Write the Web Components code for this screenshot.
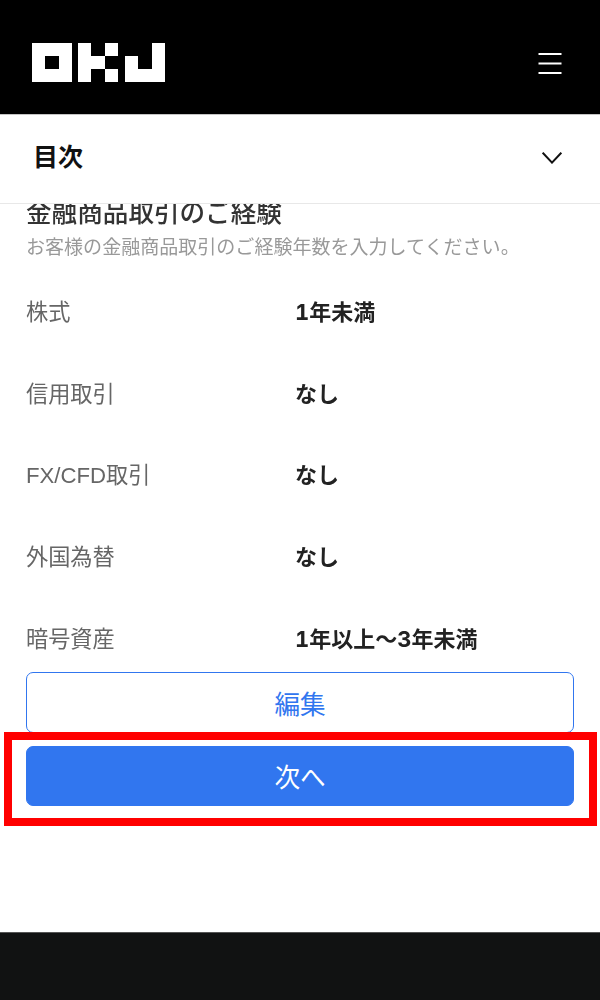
<!DOCTYPE html>
<html lang="ja">
<head>
<meta charset="utf-8">
<title>OKJ</title>
<style>
  html, body { margin: 0; padding: 0; background: #fff; }
  body { font-family: "Inter", "Noto Sans CJK JP", sans-serif; }
</style>
</head>
<body>
<okj-page>
  <okj-header slot="header"></okj-header>
  <toc-bar slot="header">目次</toc-bar>
  <exp-section title="金融商品取引のご経験" note="お客様の金融商品取引のご経験年数を入力してください。">
    <exp-row label="株式" value="1年未満"></exp-row>
    <exp-row label="信用取引" value="なし"></exp-row>
    <exp-row label="FX/CFD取引" value="なし"></exp-row>
    <exp-row label="外国為替" value="なし"></exp-row>
    <exp-row label="暗号資産" value="1年以上〜3年未満"></exp-row>
  </exp-section>
  <form-actions>
    <action-button kind="outline">編集</action-button>
    <action-button kind="primary" marked>次へ</action-button>
  </form-actions>
</okj-page>

<script>
class OkjPage extends HTMLElement {
  constructor() {
    super();
    this.attachShadow({ mode: 'open' });
    this.shadowRoot.innerHTML = `
      <style>
        :host { display: flex; flex-direction: column; width: 600px; height: 1000px; overflow: hidden; filter: blur(0.4px); }
        main { flex: 1; min-height: 0; overflow: hidden; }
        footer { height: 67px; background: #111212; border-top: 1px solid #555; }
      </style>
      <slot name="header"></slot>
      <main><slot></slot></main>
      <footer></footer>
    `;
  }
}
customElements.define('okj-page', OkjPage);

class OkjHeader extends HTMLElement {
  constructor() {
    super();
    this.attachShadow({ mode: 'open' });
    this.shadowRoot.innerHTML = `
      <style>
        :host { display: flex; justify-content: space-between; align-items: flex-start; box-sizing: border-box;
                height: 115px; padding: 43px 38px 0 32px; background: #000; border-bottom: 1px solid #c4c4c4; }
        svg { display: block; }
        .menu { margin-top: 10px; }
      </style>
      <svg width="133" height="39" viewBox="0 0 133 39" fill="#fff">
        <path fill-rule="evenodd" d="M0 0H40V39H0ZM13 13V26H27V13Z"/>
        <path d="M46 0H59V13H73V26H59V39H46ZM73 0H86V13H73ZM73 26H86V39H73Z"/>
        <path d="M120 0H133V39H93V13H106V26H120Z"/>
      </svg>
      <svg class="menu" width="24" height="21" viewBox="0 0 24 21" stroke="#fff" stroke-width="2">
        <path d="M0.5 1H23.5M0.5 10.5H23.5M0.5 20H23.5"/>
      </svg>
    `;
  }
}
customElements.define('okj-header', OkjHeader);

class TocBar extends HTMLElement {
  constructor() {
    super();
    this.attachShadow({ mode: 'open' });
    this.shadowRoot.innerHTML = `
      <style>
        :host { display: flex; justify-content: space-between; align-items: center; box-sizing: border-box;
                height: 89px; padding: 0 38px 0 33px; background: #fff; border-bottom: 1px solid #e8e8e8;
                color: #111; font-size: 25px; font-weight: 700; }
        .name { margin-bottom: 8px; }
        svg { display: block; margin-bottom: 3px; }
      </style>
      <span class="name"><slot></slot></span>
      <svg width="20" height="12" viewBox="0 0 20 12" fill="none" stroke="#111" stroke-width="2">
        <path d="M0.7 0.7L10 10.6L19.3 0.7"/>
      </svg>
    `;
  }
}
customElements.define('toc-bar', TocBar);

class ExpSection extends HTMLElement {
  constructor() {
    super();
    this.attachShadow({ mode: 'open' });
    this.shadowRoot.innerHTML = `
      <style>
        :host { display: block; padding: 0 26px; }
        h2 { margin: -9.5px 0 0; font-size: 25.6px; line-height: 36px; font-weight: 500; color: #333; }
        p { margin: 3.5px 0 28px; font-size: 19.05px; line-height: 28px; color: #999; white-space: nowrap; }
        .rows { display: flex; flex-direction: column; gap: 41.67px; }
      </style>
      <h2>${this.getAttribute('title')}</h2>
      <p>${this.getAttribute('note')}</p>
      <div class="rows"><slot></slot></div>
    `;
  }
}
customElements.define('exp-section', ExpSection);

class ExpRow extends HTMLElement {
  constructor() {
    super();
    this.attachShadow({ mode: 'open' });
    this.shadowRoot.innerHTML = `
      <style>
        :host { display: grid; grid-template-columns: 269px 1fr; height: 40px; align-items: center; font-size: 22.2px; }
        .label { color: #666; font-family: "Liberation Sans", "Noto Sans CJK JP", sans-serif; }
        .value { color: #222; font-size: 22px; font-weight: 700; font-variant-numeric: tabular-nums; }
      </style>
      <div class="label">${this.getAttribute('label')}</div>
      <div class="value">${this.getAttribute('value')}</div>
    `;
  }
}
customElements.define('exp-row', ExpRow);

class FormActions extends HTMLElement {
  constructor() {
    super();
    this.attachShadow({ mode: 'open' });
    this.shadowRoot.innerHTML = `
      <style>
        :host { display: flex; flex-direction: column; gap: 13px; margin: 15px 26px 0; }
      </style>
      <slot></slot>
    `;
  }
}
customElements.define('form-actions', FormActions);

class ActionButton extends HTMLElement {
  constructor() {
    super();
    this.attachShadow({ mode: 'open' });
    const outline = this.getAttribute('kind') === 'outline';
    this.shadowRoot.innerHTML = `
      <style>
        :host { display: block; position: relative; }
        .btn { display: flex; justify-content: center; align-items: center; box-sizing: border-box;
               height: ${outline ? 61 : 60}px; border-radius: 7px; font-size: 25.6px;
               border: 1.5px solid #3176ef;
               background: ${outline ? '#fff' : '#3176ef'};
               color: ${outline ? '#3176ef' : '#fff'}; }
        /* red annotation box that lies over the button */
        .mark { position: absolute; left: -22.5px; right: -22.5px; top: -14px; bottom: -20px; border: 8px solid #f00; }
      </style>
      <div class="btn"><slot></slot></div>
      ${this.hasAttribute('marked') ? '<div class="mark"></div>' : ''}
    `;
  }
}
customElements.define('action-button', ActionButton);
</script>
</body>
</html>
